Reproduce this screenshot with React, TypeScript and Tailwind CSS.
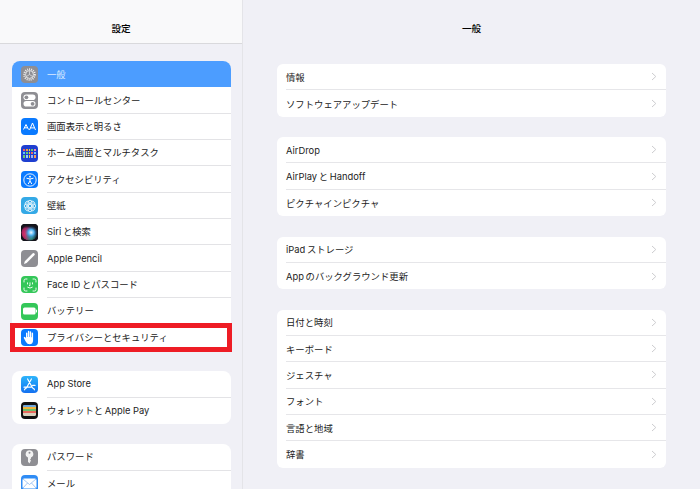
import type { ReactNode } from 'react'

const font = { fontFamily: 'Inter, "Noto Sans CJK JP", sans-serif' }

function Tile({ className, children }: { className: string; children: ReactNode }) {
  return (
    <div className={`w-[17px] h-[17px] rounded-[4px] shrink-0 flex items-center justify-center overflow-hidden ${className}`}>
      {children}
    </div>
  )
}

const GearIcon = () => (
  <svg width="15" height="15" viewBox="0 0 24 24" fill="none" stroke="#eceded">
    <circle cx="12" cy="12" r="8.5" strokeWidth="3.2" strokeDasharray="1.6 1.6" />
    <circle cx="12" cy="12" r="6.3" strokeWidth="1.4" />
    <path d="M12 12 L12 6.5 M12 12 L7.5 15 M12 12 L16.5 15" strokeWidth="1.1" />
  </svg>
)

const ToggleIcon = () => (
  <svg width="13" height="13" viewBox="0 0 13 13">
    <rect x="0.5" y="0.5" width="12" height="5.6" rx="2.8" fill="#fff" />
    <circle cx="3.4" cy="3.3" r="1.9" fill="#8e8e93" />
    <rect x="0.5" y="7" width="12" height="5.6" rx="2.8" fill="#fff" />
    <circle cx="9.6" cy="9.8" r="1.9" fill="#8e8e93" />
  </svg>
)

const TextSizeIcon = () => (
  <svg width="15" height="15" viewBox="0 0 15 15" fill="none" stroke="#fff" strokeWidth="1">
    <path d="M1.5 10.5 L4 5.5 L6.5 10.5 M2.4 8.8 H5.6" />
    <path d="M7.5 11 L10.5 4 L13.5 11 M8.6 8.9 H12.4" />
  </svg>
)

const HomeIcon = () => {
  const colors = [
    '#f0625c', '#f5a13c', '#f4d23f', '#68d06a', '#f28ab0',
    '#5ac8fa', '#62d26f', '#f5c33b', '#f06a5d', '#7fc8f8',
    '#6ac96d', '#8fd3f5', '#f2c14a', '#9fb6f0', '#f29b5a',
  ]
  return (
    <div className="w-[13px] grid grid-cols-5 gap-[1px]">
      {colors.map((c, i) => (
        <span key={i} className={i > 9 ? 'h-[3px]' : 'h-[2px]'} style={{ backgroundColor: c }} />
      ))}
    </div>
  )
}

const AccessIcon = () => (
  <svg width="14" height="14" viewBox="0 0 14 14" fill="none" stroke="#fff">
    <circle cx="7" cy="7" r="6.2" strokeWidth="0.9" />
    <circle cx="7" cy="3.7" r="0.9" fill="#fff" stroke="none" />
    <path d="M3.5 5.2 L7 6 L10.5 5.2 M7 6 V8 L5.2 11 M7 8 L8.8 11" strokeWidth="1" />
  </svg>
)

const FlowerIcon = () => (
  <svg width="14" height="14" viewBox="0 0 14 14" fill="none" stroke="#fff" strokeWidth="0.8">
    {[0, 45, 90, 135, 180, 225, 270, 315].map((a) => (
      <circle key={a} cx="7" cy="3.4" r="2.1" transform={`rotate(${a} 7 7)`} />
    ))}
  </svg>
)

const SiriIcon = () => (
  <svg width="17" height="17" viewBox="0 0 17 17">
    <defs>
      <radialGradient id="siriA" cx="0.6" cy="0.5" r="0.42">
        <stop offset="0" stopColor="#f0f8ff" />
        <stop offset="0.45" stopColor="#4ab0ee" />
        <stop offset="1" stopColor="#2a5a90" stopOpacity="0" />
      </radialGradient>
      <radialGradient id="siriB" cx="0.32" cy="0.58" r="0.5">
        <stop offset="0" stopColor="#f0386e" />
        <stop offset="0.7" stopColor="#a02460" />
        <stop offset="1" stopColor="#7a2050" stopOpacity="0" />
      </radialGradient>
      <radialGradient id="siriC" cx="0.6" cy="0.8" r="0.4">
        <stop offset="0" stopColor="#2fae9a" />
        <stop offset="1" stopColor="#2fae9a" stopOpacity="0" />
      </radialGradient>
    </defs>
    <rect width="17" height="17" fill="#14141c" />
    <circle cx="8.5" cy="8.5" r="8" fill="url(#siriB)" />
    <circle cx="8.5" cy="8.5" r="8" fill="url(#siriC)" />
    <circle cx="8.5" cy="8.5" r="8" fill="url(#siriA)" />
  </svg>
)

const PencilIcon = () => (
  <svg width="13" height="13" viewBox="0 0 13 13" fill="#fff">
    <path d="M1 12 L1.8 9.2 L9.8 1.2 Q10.6 0.6 11.4 1.4 Q12.2 2.2 11.6 3 L3.6 11 Z" />
  </svg>
)

const FaceIcon = () => (
  <svg width="14" height="14" viewBox="0 0 14 14" fill="none" stroke="#fff" strokeWidth="0.9" strokeLinecap="round">
    <path d="M1 4 V2.6 Q1 1 2.6 1 H4 M10 1 H11.4 Q13 1 13 2.6 V4 M13 10 V11.4 Q13 13 11.4 13 H10 M4 13 H2.6 Q1 13 1 11.4 V10" />
    <path d="M4.5 4.8 V6 M9.5 4.8 V6 M7 4.8 V7.6 H6.4 M4.7 9.3 Q7 11 9.3 9.3" />
  </svg>
)

const BatteryIcon = () => (
  <svg width="14" height="8" viewBox="0 0 14 8">
    <rect x="0" y="0.5" width="12.6" height="7" rx="1.6" fill="#fff" />
    <rect x="13" y="2.6" width="1" height="2.8" rx="0.5" fill="#fff" />
  </svg>
)

const HandIcon = () => (
  <svg width="13" height="15" viewBox="0 0 13 15" fill="#fff">
    <path d="M3 8 V3.2 Q3 2.4 3.7 2.4 Q4.4 2.4 4.4 3.2 V7 H4.9 V1.6 Q4.9 0.8 5.6 0.8 Q6.3 0.8 6.3 1.6 V7 H6.8 V2 Q6.8 1.2 7.5 1.2 Q8.2 1.2 8.2 2 V7.2 H8.7 V3.4 Q8.7 2.6 9.4 2.6 Q10.1 2.6 10.1 3.4 V10 Q10.1 14.2 6.6 14.2 Q4.2 14.2 3 12 L0.9 8.2 Q0.5 7.4 1.1 7 Q1.8 6.6 2.3 7.3 Z" />
  </svg>
)

const AppStoreIcon = () => (
  <svg width="13" height="13" viewBox="0 0 13 13" fill="none" stroke="#fff" strokeWidth="1.2" strokeLinecap="round">
    <path d="M4.6 1 L9.6 10 M8.4 1 L3.4 10 M1 9.2 H8 M9.6 7.4 H12 M1.5 11.8 L2.4 10.4 M11.5 11.8 L10.6 10.4" />
  </svg>
)

const WalletIcon = () => (
  <div className="w-[13px] h-[11px] rounded-[1.5px] bg-[#d8d0bc] overflow-hidden flex flex-col">
    <span className="h-[2px] bg-[#6fa8dc]" />
    <span className="h-[2px] bg-[#f2b53c]" />
    <span className="h-[2px] bg-[#6cbf6a]" />
    <span className="h-[2px] bg-[#e8685c]" />
  </div>
)

const KeyIcon = () => (
  <svg width="9" height="14" viewBox="0 0 9 14">
    <path fillRule="evenodd" fill="#f2f2f2" d="M4.5 0.3 A3.8 3.8 0 0 1 6 7.6 V8.6 L5 9.5 L6 10.4 L4.5 13.4 L3 11.8 V7.6 A3.8 3.8 0 0 1 4.5 0.3 Z M4.5 1.8 A1 1 0 1 0 4.5 3.8 A1 1 0 1 0 4.5 1.8 Z" />
  </svg>
)

const MailIcon = () => (
  <svg width="15" height="11" viewBox="0 0 15 11" fill="none">
    <rect x="0.5" y="0.5" width="14" height="10" rx="1.5" fill="#fff" />
    <path d="M1 1 L7.5 6.5 L14 1 M1 10 L5.5 5 M14 10 L9.5 5" stroke="#7fb0ee" strokeWidth="0.7" />
  </svg>
)

type SideItem = { label: string; icon: ReactNode; active?: boolean; marked?: boolean }

const sideGroups: SideItem[][] = [
  [
    { label: '一般', active: true, icon: <Tile className="bg-[#8e8e93]"><GearIcon /></Tile> },
    { label: 'コントロールセンター', icon: <Tile className="bg-[#8e8e93]"><ToggleIcon /></Tile> },
    { label: '画面表示と明るさ', icon: <Tile className="bg-[#0a7aff]"><TextSizeIcon /></Tile> },
    { label: 'ホーム画面とマルチタスク', icon: <Tile className="bg-[#1f3fd0]"><HomeIcon /></Tile> },
    { label: 'アクセシビリティ', icon: <Tile className="bg-[#0a7aff]"><AccessIcon /></Tile> },
    { label: '壁紙', icon: <Tile className="bg-[#34a9e6]"><FlowerIcon /></Tile> },
    { label: 'Siri\u2009と検索', icon: <Tile className="bg-black"><SiriIcon /></Tile> },
    { label: 'Apple Pencil', icon: <Tile className="bg-[#8e8e93]"><PencilIcon /></Tile> },
    { label: 'Face ID\u2009とパスコード', icon: <Tile className="bg-[#34c759]"><FaceIcon /></Tile> },
    { label: 'バッテリー', icon: <Tile className="bg-[#34c759]"><BatteryIcon /></Tile> },
    { label: 'プライバシーとセキュリティ', marked: true, icon: <Tile className="bg-[#0a7aff]"><HandIcon /></Tile> },
  ],
  [
    { label: 'App Store', icon: <Tile className="bg-gradient-to-b from-[#2fb4fb] to-[#1670f0]"><AppStoreIcon /></Tile> },
    { label: 'ウォレットと\u2009Apple Pay', icon: <Tile className="bg-[#111]"><WalletIcon /></Tile> },
  ],
  [
    { label: 'パスワード', icon: <Tile className="bg-[#8e8e93]"><KeyIcon /></Tile> },
    { label: 'メール', icon: <Tile className="bg-[#2f8cf5]"><MailIcon /></Tile> },
  ],
]

const mainGroups = [
  ['情報', 'ソフトウェアアップデート'],
  ['AirDrop', 'AirPlay\u2009と\u2009Handoff', 'ピクチャインピクチャ'],
  ['iPad\u2009ストレージ', 'App\u2009のバックグラウンド更新'],
  ['日付と時刻', 'キーボード', 'ジェスチャ', 'フォント', '言語と地域', '辞書'],
]

function SideRow({ item, last }: { item: SideItem; last: boolean }) {
  return (
    <div className={`relative h-[26.35px] flex items-center pl-[9px] gap-[9px] ${item.active ? 'bg-[#4c9dff]' : ''}`}>
      {item.icon}
      <div className={`flex-1 h-full flex items-center pt-[1px] text-[9.35px] ${item.active ? 'text-[#dcebff]' : 'text-[#222]'} ${last || item.active ? '' : 'border-b border-[#e3e3e6]'}`}>
        {item.label}
      </div>
      {item.marked && <div className="absolute -left-[2px] -right-[1px] -top-[1px] -bottom-[1px] border-[5px] border-[#ee1c25]" />}
    </div>
  )
}

function MainRow({ label, last }: { label: string; last: boolean }) {
  return (
    <div className={`h-[26.35px] flex items-center justify-between pr-[9px] text-[9.35px] text-[#222] ${last ? '' : 'border-b border-[#e6e6e9]'}`}>
      <span className="pt-[2px]">{label}</span>
      <svg width="6" height="9" viewBox="0 0 6 9" fill="none" stroke="#cdcdd0" strokeWidth="1">
        <path d="M1 1 L4.8 4.5 L1 8" />
      </svg>
    </div>
  )
}

export default function App() {
  return (
    <div className="w-[700px] h-[489px] flex overflow-hidden bg-[#f0f0f6]" style={font}>
      <aside className="w-[243px] shrink-0 h-full border-r border-[#e4e4e8] overflow-hidden">
        <header className="h-[44px] bg-[#f9f9fa] border-b border-[#d9d9dc] flex items-center justify-center pt-[15px] text-[9.6px] font-medium text-black">
          設定
        </header>
        <div className="pt-[17px] px-[12px] pr-[11px] flex flex-col gap-[20.4px]">
          {sideGroups.map((group, i) => (
            <div key={i} className="bg-white rounded-[8px] overflow-visible">
              {group.map((item, j) => (
                <div key={item.label} className={item.active ? 'rounded-t-[8px] overflow-hidden' : ''}>
                  <SideRow item={item} last={j === group.length - 1} />
                </div>
              ))}
            </div>
          ))}
        </div>
      </aside>
      <main className="flex-1 min-w-0">
        <header className="h-[44px] flex items-center justify-center pt-[15px] text-[9.6px] font-medium text-black">
          一般
        </header>
        <div className="pt-[20px] pl-[34px] pr-[34px] flex flex-col gap-[20.4px]">
          {mainGroups.map((group, i) => (
            <div key={i} className="bg-white rounded-[6px] pl-[9px]">
              {group.map((label, j) => (
                <MainRow key={label} label={label} last={j === group.length - 1} />
              ))}
            </div>
          ))}
        </div>
      </main>
    </div>
  )
}
